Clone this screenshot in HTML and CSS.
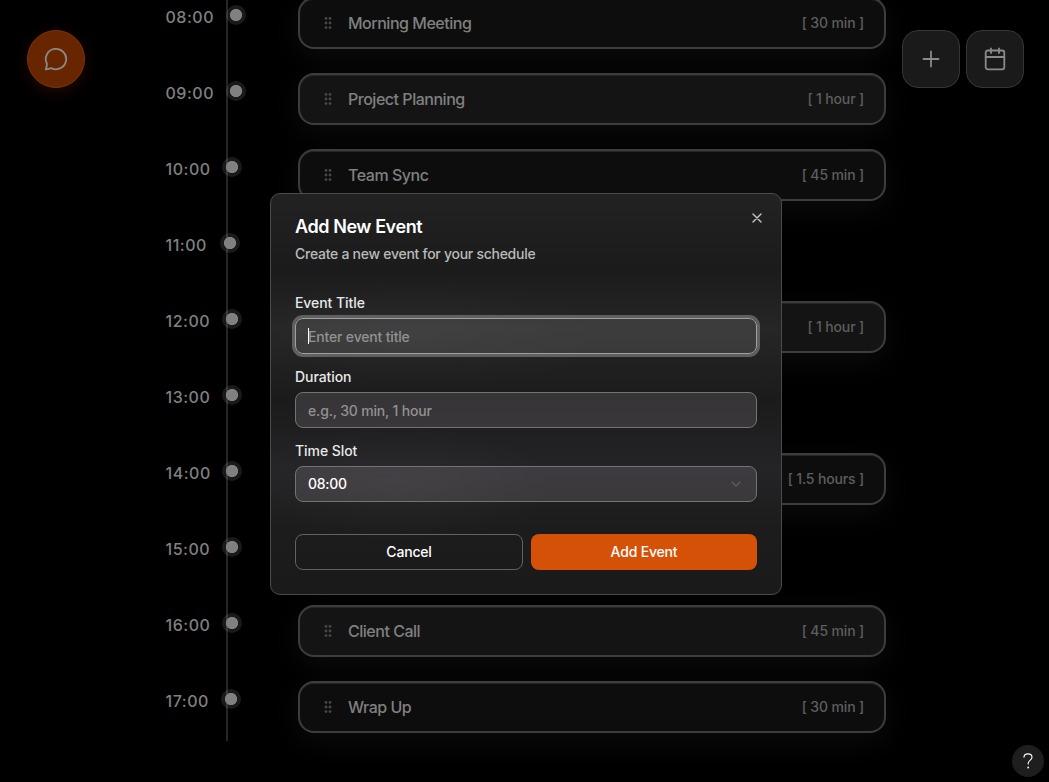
FILE: index.html
```html
<!DOCTYPE html>
<html lang="en">
<head>
<meta charset="utf-8">
<title>Schedule</title>
<link rel="stylesheet" href="styles.css">
</head>
<body>
<svg class="defs" width="0" height="0" aria-hidden="true">
  <symbol id="grip" viewBox="0 0 8 14">
    <circle cx="2" cy="2.4" r="1.4"/><circle cx="6" cy="2.4" r="1.4"/>
    <circle cx="2" cy="7" r="1.4"/><circle cx="6" cy="7" r="1.4"/>
    <circle cx="2" cy="11.6" r="1.4"/><circle cx="6" cy="11.6" r="1.4"/>
  </symbol>
</svg>
<main class="schedule">
  <div class="line"></div>
  <div class="row"><div class="time"><span>08:00</span><i class="dot"></i></div>
    <div class="card"><svg class="grip"><use href="#grip"/></svg><span class="name">Morning Meeting</span><span class="length">[ 30 min ]</span></div></div>
  <div class="row"><div class="time"><span>09:00</span><i class="dot"></i></div>
    <div class="card light"><svg class="grip"><use href="#grip"/></svg><span class="name">Project Planning</span><span class="length">[ 1 hour ]</span></div></div>
  <div class="row"><div class="time"><span>10:00</span><i class="dot"></i></div>
    <div class="card"><svg class="grip"><use href="#grip"/></svg><span class="name">Team Sync</span><span class="length">[ 45 min ]</span></div></div>
  <div class="row"><div class="time"><span>11:00</span><i class="dot"></i></div></div>
  <div class="row"><div class="time"><span>12:00</span><i class="dot"></i></div>
    <div class="card light"><span class="length">[ 1 hour ]</span></div></div>
  <div class="row"><div class="time"><span>13:00</span><i class="dot"></i></div></div>
  <div class="row"><div class="time"><span>14:00</span><i class="dot"></i></div>
    <div class="card"><span class="length">[ 1.5 hours ]</span></div></div>
  <div class="row"><div class="time"><span>15:00</span><i class="dot"></i></div></div>
  <div class="row"><div class="time"><span>16:00</span><i class="dot"></i></div>
    <div class="card light"><svg class="grip"><use href="#grip"/></svg><span class="name">Client Call</span><span class="length">[ 45 min ]</span></div></div>
  <div class="row"><div class="time"><span>17:00</span><i class="dot"></i></div>
    <div class="card"><svg class="grip"><use href="#grip"/></svg><span class="name">Wrap Up</span><span class="length">[ 30 min ]</span></div></div>
</main>

<button class="chat" aria-label="Chat"><svg width="24" height="24" viewBox="0 0 24 24"><path d="M7.5 21.2A10.200 10.200 0 1 0 2.800 16.500Q3.200 18.500 1.800 22.300Q5 22.100 7.500 21.200Z"/></svg></button>
<div class="actions">
  <button class="action" aria-label="Add"><svg width="24" height="24" viewBox="0 0 24 24"><path d="M4.5 12h15M12 4.5v15"/></svg></button>
  <button class="action" aria-label="Calendar"><svg width="24" height="24" viewBox="0 0 24 24"><path d="M8 1.5v4.500M16 1.5v4.500M2.700 10h18.600"/><rect x="2.700" y="3.500" width="18.600" height="18.800" rx="2"/></svg></button>
</div>

<section class="dialog" role="dialog">
  <button class="close" aria-label="Close"><svg width="16" height="16" viewBox="0 0 24 24"><path d="M18 6 6 18M6 6l12 12"/></svg></button>
  <h2>Add New Event</h2>
  <p>Create a new event for your schedule</p>
  <div class="fields">
    <div class="field"><label>Event Title</label><div class="input focused"><i class="caret"></i><span>Enter event title</span></div></div>
    <div class="field"><label>Duration</label><div class="input"><span>e.g., 30 min, 1 hour</span></div></div>
    <div class="field"><label>Time Slot</label><div class="input select"><span>08:00</span><svg width="16" height="16" viewBox="0 0 24 24"><path d="m6 9 6 6 6-6"/></svg></div></div>
  </div>
  <div class="buttons"><button class="cancel">Cancel</button><button class="submit">Add Event</button></div>
</section>

<div class="help"><svg width="14" height="18" viewBox="0 0 14 18"><path d="M3 5.200C3 2.800 4.700 1.900 7 1.900s4 1.200 4 3.300c0 2.900-3.800 3.300-3.800 6v.8"/><circle cx="7.200" cy="15.500" r=".4"/></svg></div>
</body>
</html>
```
FILE: styles.css
```css
* { box-sizing: border-box; }
body {
  margin: 0;
  height: 782px;
  overflow: hidden;
  position: relative;
  background: #000;
  color: #fff;
  font: 500 14px/20px Inter, sans-serif;
}
button { font: inherit; color: inherit; padding: 0; margin: 0; border: 0; background: none; }
svg { fill: none; stroke: currentColor; stroke-width: 2; stroke-linecap: round; stroke-linejoin: round; }
.defs { position: absolute; }

.schedule { position: relative; width: 721px; margin: -15px 0 0 165px; }
.line { position: absolute; left: 61px; top: 0; width: 2px; height: 756px; background: #262626; }
.row { display: flex; align-items: center; height: 76px; }
.time { position: relative; display: flex; align-items: center; gap: 11.7px; width: 133px; flex: none; margin-top: -12px; padding-left: .5px; color: #808080; font-size: 16px; line-height: 24px; letter-spacing: .52px; }
.time span { min-width: 42.6px; }
.dot { width: 20px; height: 20px; margin-top: -4px; border-radius: 50%; background: radial-gradient(circle, #808080 5.7px, rgba(255,255,255,.1) 6.5px); }
.card {
  flex: 1;
  height: 52px;
  display: flex;
  align-items: center;
  padding: 0 20px 0 24px;
  border: 2px solid #3d3d3d;
  border-radius: 16px;
  background: #0d0d0d;
  box-shadow: 0 8px 32px rgba(255,255,255,.05), inset 0 1px 0 #252525;
}
.card.light { background: #141414; }
.grip { width: 8px; height: 14px; margin-right: 16px; fill: #484848; stroke: none; }
.name { color: #808080; font-size: 16px; line-height: 24px; font-weight: 450; letter-spacing: -.48px; }
.length { margin-left: auto; color: #5e5e5e; font-weight: 450; letter-spacing: -.15px; }

.chat, .action { display: grid; place-items: center; width: 58px; height: 58px; color: #8a8a8a; }
.chat { position: absolute; left: 27px; top: 30px; border-radius: 50%; background: #682600; border: 1px solid #7c330a; box-shadow: 0 4px 16px rgba(202,73,0,.15); }
.chat svg, .action svg { stroke-width: 1.8; }
.actions { position: absolute; left: 902px; top: 30px; display: flex; gap: 6px; }
.action { border: 1px solid #363636; border-radius: 16px; background: #1a1a1a; }

.dialog {
  position: absolute;
  left: 270px;
  top: 193px;
  width: 512px;
  height: 402px;
  padding: 24px;
  border: 1px solid #4b4b4b;
  border-radius: 10px;
  background:
    radial-gradient(ellipse 190px 60px at 145px 140px, rgba(255,255,255,.025), transparent),
    radial-gradient(ellipse 160px 60px at 125px 290px, rgba(255,245,255,.035), transparent),
    linear-gradient(#222 0, #1b1b1b 75px, #262626 135px, #1b1b1b 205px, #242326 275px, #1c1c1c 335px, #1a1a1a 100%);
}
.dialog h2 { margin: 0; font-size: 18px; line-height: 18px; font-weight: 600; letter-spacing: -.42px; }
.dialog p { margin: 8px 0 0; color: #bababa; font-weight: 450; letter-spacing: -.27px; }
.close { position: absolute; right: 16px; top: 16px; width: 16px; height: 16px; color: #c8c8c8; }
.close svg { display: block; }
.fields { display: grid; gap: 16px; margin-top: 32px; }
.field { display: grid; gap: 8px; }
.field label { line-height: 14px; color: #e8e8e8; font-weight: 550; letter-spacing: -.07px; }
.input { position: relative; height: 36px; display: flex; align-items: center; justify-content: space-between; padding: 0 12px; border: 1px solid #737274; border-radius: 8px; background: rgba(255,240,255,.12); color: #929292; font-weight: 450; letter-spacing: -.17px; }
.input span { padding-top: 1px; }
.input.focused { border-color: #a0a0a0; background: rgba(255,255,255,.105); box-shadow: 0 0 0 3px #606060; }
.caret { position: absolute; left: 12px; top: 9px; width: 1px; height: 16px; background: #fff; }
.select { color: #fff; font-weight: 550; letter-spacing: -.28px; }
.select span { padding-top: 0; }
.select svg { color: #5c5b60; }
.buttons { display: grid; grid-template-columns: 228px 226px; gap: 8px; margin-top: 32px; }
.buttons button { height: 36px; border-radius: 8px; font-weight: 550; letter-spacing: -.18px; }
.cancel { border: 1px solid #626262; }
.submit { background: #d65108; }
.help { position: absolute; left: 1012px; top: 745px; width: 32px; height: 32px; display: grid; place-items: center; border-radius: 50%; background: #1e1e1e; }
.help svg { stroke-width: 1.1; }
```
